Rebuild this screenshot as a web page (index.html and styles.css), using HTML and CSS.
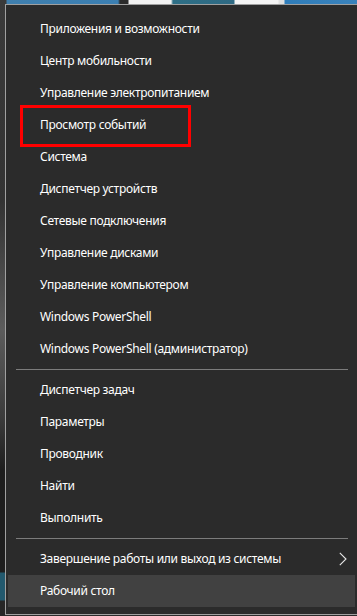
FILE: index.html
```html
<!DOCTYPE html>
<html lang="ru">
<head>
<meta charset="utf-8">
<link rel="stylesheet" href="styles.css">
</head>
<body>
<div class="desktop">
  <div class="menu">
    <div class="item">Приложения и возможности</div>
    <div class="item">Центр мобильности</div>
    <div class="item">Управление электропитанием</div>
    <div class="item">Просмотр событий</div>
    <div class="item">Система</div>
    <div class="item">Диспетчер устройств</div>
    <div class="item">Сетевые подключения</div>
    <div class="item">Управление дисками</div>
    <div class="item">Управление компьютером</div>
    <div class="item">Windows PowerShell</div>
    <div class="item">Windows PowerShell (администратор)</div>
    <div class="sep"></div>
    <div class="item">Диспетчер задач</div>
    <div class="item">Параметры</div>
    <div class="item">Проводник</div>
    <div class="item">Найти</div>
    <div class="item">Выполнить</div>
    <div class="sep"></div>
    <div class="item has-sub">Завершение работы или выход из системы
      <svg class="chev" width="8" height="14" viewBox="0 0 8 14"><path d="M0.8 0.8 L7 7 L0.8 13.2" fill="none" stroke="#e8e8e8" stroke-width="1.1"/></svg>
    </div>
    <div class="item hover">Рабочий стол</div>
    <div class="highlight"></div>
  </div>
</div>
</body>
</html>
```
FILE: styles.css
```css
html, body {
  margin: 0;
  padding: 0;
  width: 357px;
  height: 616px;
  overflow: hidden;
}
.desktop {
  width: 357px;
  height: 616px;
  padding: 4px 0 0 5px;
  box-sizing: border-box;
  background:
    linear-gradient(to right,
      #3a3a3a 0, #3a3a3a 6px,
      #3f7fae 7px, #3b7fb2 118px,
      #2b2b2b 120px, #2b2b2b 128px,
      #f2f2f2 129px, #f2f2f2 171px,
      #2e6f86 173px, #2f6a84 234px,
      #f4f4f4 235px, #f4f4f4 278px,
      #e0e0e0 279px, #e0e0e0 284px,
      #2f7dba 285px, #3a82bb 357px) top left / 357px 4px no-repeat,
    linear-gradient(to bottom,
      #3a3a3a 0, #333 200px, #5c5c5c 330px, #3a3a3a 420px,
      #1e1e1e 470px, #1e1e1e 572px,
      #22596e 573px, #22596e 600px,
      #262626 601px, #262626 616px) top left / 5px 616px no-repeat,
    #2b2b2b;
}
.menu {
  position: relative;
  width: 353px;
  height: 611px;
  box-sizing: border-box;
  background: #2b2b2b;
  border: 1px solid #a0a0a0;
  padding: 8px 0 7px 0;
  font-family: "Segoe UI", "Noto Sans", "Open Sans", sans-serif;
  font-size: 12px;
  letter-spacing: -0.3px;
  color: #ffffff;
}
.item {
  height: 32px;
  line-height: 32px;
  margin: 0 2px;
  padding-left: 32px;
  position: relative;
  white-space: nowrap;
}
.item.hover {
  background: #414141;
}
.sep {
  height: 1px;
  margin: 4px 9px 4px 10px;
  background: #7c7c7c;
}
.chev {
  position: absolute;
  right: 8px;
  top: 9px;
}
.highlight {
  position: absolute;
  left: 14px;
  top: 100px;
  width: 165px;
  height: 36px;
  border: 3px solid #ff0000;
}
```
